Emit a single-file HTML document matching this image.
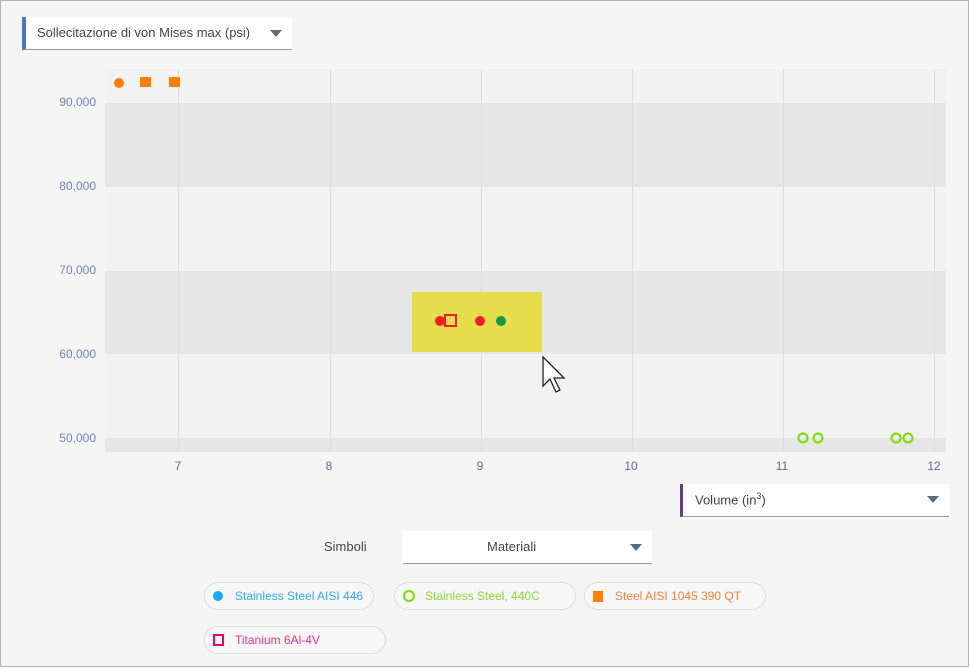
<!DOCTYPE html>
<html><head><style>
body{margin:0;width:969px;height:667px;overflow:hidden;background:#fff;font-family:"Liberation Sans",sans-serif;}
#f{position:absolute;left:0;top:0;width:967px;height:665px;border:1px solid #b4b4b4;background:#f5f5f5;}
.dd{position:absolute;background:#fff;border-bottom:1px solid #999;font-size:13px;color:#444;}
.tri{position:absolute;width:0;height:0;border-left:6px solid transparent;border-right:6px solid transparent;border-top:7px solid #5a6a80;}
.yl{position:absolute;right:872px;font-size:12px;color:#6b86c0;}
.xl{position:absolute;top:458px;font-size:12px;color:#7a5aa0;width:20px;text-align:center;}
.chip{position:absolute;height:26px;border:1px solid #ddd;border-radius:14px;background:#f7f7f7;font-size:12px;line-height:26px;}
</style></head><body><div id="f">
<div class="dd" style="left:21px;top:16px;width:266px;height:32px;border-left:4px solid #4a77c4;">
<span style="position:absolute;left:11px;top:8px;">Sollecitazione di von Mises max (psi)</span>
<div class="tri" style="left:244px;top:13px"></div></div>

<svg style="position:absolute;left:0;top:0" width="969" height="667">
<rect x="104" y="68" width="841" height="383" fill="#f2f2f2"/>
<rect x="104" y="102" width="841" height="84" fill="#e6e6e6"/>
<rect x="104" y="270" width="841" height="83" fill="#e6e6e6"/>
<rect x="104" y="437" width="841" height="14" fill="#e6e6e6"/>
<g stroke="#dedede" stroke-width="1">
<line x1="177.5" y1="68" x2="177.5" y2="451"/><line x1="329.5" y1="68" x2="329.5" y2="451"/>
<line x1="480.5" y1="68" x2="480.5" y2="451"/><line x1="631.5" y1="68" x2="631.5" y2="451"/>
<line x1="782.5" y1="68" x2="782.5" y2="451"/><line x1="933.5" y1="68" x2="933.5" y2="451"/>
</g>
<circle cx="118" cy="82" r="5" fill="#ff7f00"/>
<rect x="139" y="76" width="11" height="10" fill="#ff7f00"/>
<rect x="168" y="76" width="11" height="10" fill="#ff7f00"/>
<rect x="411" y="291" width="130" height="60" fill="#e6dc3c" opacity="0.9"/>
<circle cx="439" cy="320" r="5" fill="#ee2020"/>
<rect x="444" y="314" width="11" height="11" fill="none" stroke="#ee2020" stroke-width="2"/>
<circle cx="479" cy="320" r="5" fill="#ee2020"/>
<circle cx="500" cy="320" r="5" fill="#119944"/>
<path d="M542 356 L542 385 L549 378 L555 391 L559 389 L553 377 L563 377 Z" fill="#fff" stroke="#222" stroke-width="1.3"/>
<g fill="none" stroke="#77dd00" stroke-width="2">
<circle cx="802" cy="437" r="4.5"/><circle cx="817" cy="437" r="4.5"/>
<circle cx="895" cy="437" r="4.5"/><circle cx="907" cy="437" r="4.5"/></g>
</svg>
<div class="yl" style="top:94px">90,000</div>
<div class="yl" style="top:178px">80,000</div>
<div class="yl" style="top:262px">70,000</div>
<div class="yl" style="top:346px">60,000</div>
<div class="yl" style="top:430px">50,000</div>
<div class="xl" style="left:167px">7</div><div class="xl" style="left:318px">8</div>
<div class="xl" style="left:469px">9</div><div class="xl" style="left:620px">10</div>
<div class="xl" style="left:771px">11</div><div class="xl" style="left:923px">12</div>

<div class="dd" style="left:679px;top:483px;width:266px;height:32px;border-left:3px solid #6a3a8a;">
<span style="position:absolute;left:12px;top:7px;">Volume (in<sup style="font-size:9px">3</sup>)</span>
<div class="tri" style="left:244px;top:12px"></div></div>
<div style="position:absolute;left:323px;top:538px;font-size:13px;color:#444">Simboli</div>
<div class="dd" style="left:402px;top:530px;width:249px;height:32px;">
<span style="position:absolute;left:84px;top:8px;">Materiali</span>
<div class="tri" style="left:227px;top:13px"></div></div>

<div class="chip" style="left:203px;top:581px;width:168px;color:#33aaff"><span style="position:absolute;left:8px;top:8px;width:10px;height:10px;border-radius:50%;background:#11aaff"></span><span style="position:absolute;left:30px">Stainless Steel AISI 446</span></div>
<div class="chip" style="left:393px;top:581px;width:180px;color:#88dd33"><span style="position:absolute;left:8px;top:7px;width:8px;height:8px;border-radius:50%;border:2px solid #77dd00"></span><span style="position:absolute;left:30px">Stainless Steel, 440C</span></div>
<div class="chip" style="left:583px;top:581px;width:180px;color:#ff7f33"><span style="position:absolute;left:8px;top:8px;width:10px;height:11px;background:#ff7f00"></span><span style="position:absolute;left:30px">Steel AISI 1045 390 QT</span></div>
<div class="chip" style="left:203px;top:625px;width:180px;color:#ee3388"><span style="position:absolute;left:8px;top:7px;width:7px;height:8px;border:2px solid #ee0077"></span><span style="position:absolute;left:30px">Titanium 6Al-4V</span></div>
</div></body></html>
